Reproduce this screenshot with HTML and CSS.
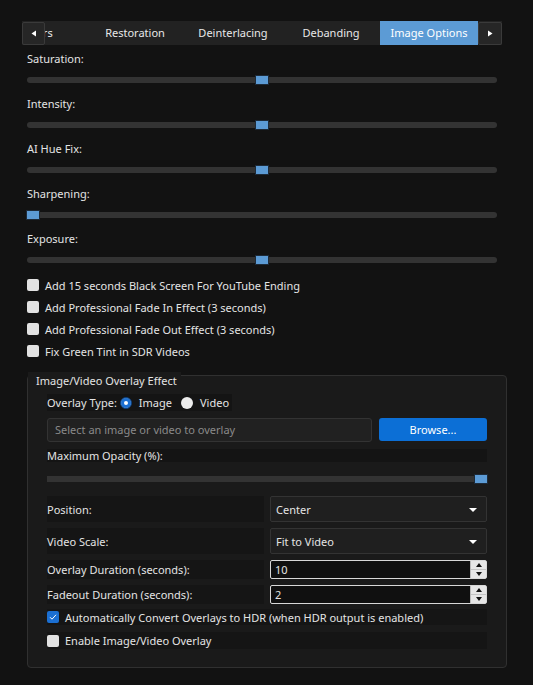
FILE: index.html
```html
<!DOCTYPE html>
<html lang="en">
  <head>
    <meta charset="UTF-8" />
    <meta name="viewport" content="width=device-width, initial-scale=1.0" />
    <title>Image Options</title>
    <link rel="stylesheet" href="styles.css">
  </head>

  <body>
    <div class="page">
      <div class="tabbar">
        <div class="tab-view">
          <div class="tab-track">
            <div class="tab">Filters</div>
            <div class="tab">Restoration</div>
            <div class="tab">Deinterlacing</div>
            <div class="tab">Debanding</div>
            <div class="tab active">Image Options</div>
          </div>
        </div>
        <div class="scroll-btn left">
          <svg width="6" height="7" viewBox="0 0 6 7"><path d="M5 0.5v6L0.5 3.5z" fill="#fff"/></svg>
        </div>
        <div class="scroll-btn right">
          <svg width="6" height="7" viewBox="0 0 6 7"><path d="M1 0.5v6l4.5-3z" fill="#fff"/></svg>
        </div>
      </div>

      <div class="field">
        <div class="label">Saturation:</div>
        <div class="slider"><span class="handle" style="--v: 0.5"></span></div>
      </div>
      <div class="field">
        <div class="label">Intensity:</div>
        <div class="slider"><span class="handle" style="--v: 0.5"></span></div>
      </div>
      <div class="field">
        <div class="label">AI Hue Fix:</div>
        <div class="slider"><span class="handle" style="--v: 0.5"></span></div>
      </div>
      <div class="field">
        <div class="label">Sharpening:</div>
        <div class="slider"><span class="handle" style="--v: 0"></span></div>
      </div>
      <div class="field">
        <div class="label">Exposure:</div>
        <div class="slider"><span class="handle" style="--v: 0.5"></span></div>
      </div>

      <div class="checks">
        <label class="check"><span class="box"></span>Add 15 seconds Black Screen For YouTube Ending</label>
        <label class="check"><span class="box"></span>Add Professional Fade In Effect (3 seconds)</label>
        <label class="check"><span class="box"></span>Add Professional Fade Out Effect (3 seconds)</label>
        <label class="check"><span class="box"></span>Fix Green Tint in SDR Videos</label>
      </div>

      <div class="group">
        <div class="group-title">Image/Video Overlay Effect</div>

        <div class="radio-row">
          <span>Overlay Type:</span>
          <span class="radio checked"></span><span>Image</span>
          <span class="radio"></span><span>Video</span>
        </div>

        <div class="path-row">
          <div class="path-input">Select an image or video to overlay</div>
          <div class="browse">Browse...</div>
        </div>

        <div class="opacity-label">Maximum Opacity (%):</div>
        <div class="opacity-slider">
          <div class="groove"><span class="handle" style="--v: 1"></span></div>
        </div>

        <div class="form">
          <div class="cell">Position:</div>
          <div class="combo">Center<span class="arrow"></span></div>
          <div class="cell">Video Scale:</div>
          <div class="combo">Fit to Video<span class="arrow"></span></div>
          <div class="cell">Overlay Duration (seconds):</div>
          <div class="spin">10<span class="spin-btns"><i class="up"></i><i class="down"></i></span></div>
          <div class="cell">Fadeout Duration (seconds):</div>
          <div class="spin">2<span class="spin-btns"><i class="up"></i><i class="down"></i></span></div>
        </div>

        <label class="check row hdr">
          <span class="box on">
            <svg width="12" height="12" viewBox="0 0 12 12"><path d="M3 6.2l2 2 4-4.4" fill="none" stroke="#fff" stroke-width="1"/></svg>
          </span>Automatically Convert Overlays to HDR (when HDR output is enabled)
        </label>
        <label class="check row enable"><span class="box"></span>Enable Image/Video Overlay</label>
      </div>
    </div>
  </body>
</html>
```

FILE: styles.css
```css
* {
  box-sizing: border-box;
}

body {
  margin: 0;
  background: #121212;
  color: #e4e4e4;
  font-family: "Noto Sans", "DejaVu Sans", sans-serif;
  font-size: 11px;
}

.page {
  padding: 21px 26px 0 27px;
}

/* tabs */
.tabbar {
  display: flex;
  position: relative;
  height: 24px;
  margin: 0 5px 0 -5px;
  background: #222;
}
.tab-view {
  flex: 1;
  overflow: hidden;
}
.tab-track {
  display: flex;
  margin-left: -34px;
}
.tab {
  flex: none;
  width: 98px;
  height: 24px;
  line-height: 24px;
  text-align: center;
  white-space: nowrap;
  color: #e8e8e8;
}
.tab.active {
  background: #5c9bd5;
  color: #fff;
}
.scroll-btn {
  display: flex;
  align-items: center;
  justify-content: center;
  width: 24px;
  height: 23px;
  margin-top: 1px;
  background: #262626;
  border: 1px solid #3a3a3a;
  border-radius: 2px;
}
.scroll-btn.left {
  position: absolute;
  left: 0;
  top: 0;
  width: 23px;
}

/* sliders */
.field {
  height: 45px;
  padding-top: 6px;
  margin-right: 10px;
}
.label {
  line-height: 16px;
}
.slider {
  position: relative;
  height: 6px;
  margin-top: 10px;
  background: #333;
  border-radius: 3px;
}
.handle {
  position: absolute;
  top: -1px;
  left: calc((100% - 12px) * var(--v));
  width: 12px;
  height: 8px;
  background: #5c9bd5;
  outline: 1px solid #1d2a38;
}

/* checkboxes */
.checks {
  margin-top: 4px;
}
.check {
  display: flex;
  align-items: center;
  gap: 6px;
  height: 22px;
  white-space: nowrap;
}
.box {
  flex: none;
  width: 12px;
  height: 12px;
  border-radius: 2px;
  background: #e2e2e2;
}
.box.on {
  background: #1b6fd2;
}
.box svg {
  display: block;
}

/* overlay group */
.group {
  margin-top: 13px;
  padding: 0 19px 18px;
  background: #1a1a1a;
  border: 1px solid #303030;
  border-radius: 4px;
}
.group-title {
  width: fit-content;
  margin: -4px 0 0 -19px;
  padding: 0 4px 0 8px;
  line-height: 17px;
  background: #1a1a1a;
}
.radio-row {
  display: flex;
  align-items: center;
  width: 185px;
  height: 17px;
  margin-top: 5px;
  white-space: nowrap;
  background: #141414;
}
.radio {
  flex: none;
  width: 12px;
  height: 12px;
  margin: 0 7px 0 9px;
  border-radius: 50%;
  background: #ececec;
}
.radio.checked {
  margin-left: 3px;
  background: #1b6fd2;
  border: 1px solid #0e3f7a;
  box-shadow: inset 0 0 0 3px #1b6fd2, inset 0 0 0 6px #fff;
}
.path-row {
  display: flex;
  gap: 7px;
  margin-top: 7px;
}
.path-input {
  flex: 1;
  height: 24px;
  line-height: 22px;
  padding-left: 7px;
  color: #8a8a8a;
  background: #212121;
  border: 1px solid #333;
  border-radius: 3px;
}
.browse {
  width: 108px;
  height: 23px;
  line-height: 23px;
  text-align: center;
  color: #fff;
  background: #0c6fd6;
  border-radius: 3px;
}
.opacity-label {
  height: 13px;
  line-height: 13px;
  margin-top: 7px;
  background: #141414;
}
.opacity-slider {
  height: 27px;
  padding-top: 14px;
}
.groove {
  position: relative;
  height: 6px;
  background: #333;
}
.form {
  display: grid;
  grid-template-columns: 1fr 1fr;
  grid-template-rows: 26px 26px 19px 19px;
  column-gap: 6px;
  row-gap: 6px;
  margin-top: 7px;
}
.cell {
  display: flex;
  align-items: center;
  background: #151515;
}
.combo {
  position: relative;
  display: flex;
  align-items: center;
  padding-left: 5px;
  background: #1f1f1f;
  border: 1px solid #333;
  border-radius: 2px;
}
.arrow {
  position: absolute;
  right: 9px;
  top: 11px;
  border-left: 4px solid transparent;
  border-right: 4px solid transparent;
  border-top: 4px solid #fff;
}
.spin {
  position: relative;
  display: flex;
  align-items: center;
  padding-left: 4px;
  background: #101010;
  border: 1px solid #d8d8d8;
  border-radius: 2px;
}
.spin-btns {
  position: absolute;
  right: 0;
  top: 0;
  bottom: 0;
  width: 16px;
  display: flex;
  flex-direction: column;
  background: #e6e6e6;
  border-left: 1px solid #bbb;
}
.spin-btns i {
  flex: 1;
  display: flex;
  align-items: center;
  justify-content: center;
}
.spin-btns i::after {
  content: "";
  border-left: 3px solid transparent;
  border-right: 3px solid transparent;
}
.spin-btns .up::after {
  border-bottom: 4px solid #111;
}
.spin-btns .down {
  border-top: 1px solid #c4c4c4;
}
.spin-btns .down::after {
  border-top: 4px solid #111;
}
.check.row {
  background: #151515;
}
.hdr {
  height: 16px;
  margin-top: 5px;
}
.enable {
  height: 17px;
  margin-top: 7px;
}
```
